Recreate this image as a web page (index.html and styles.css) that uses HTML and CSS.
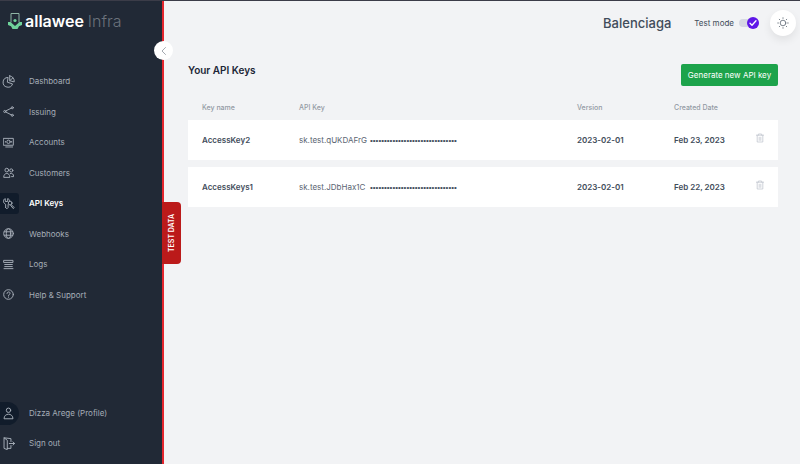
FILE: index.html
```
<!DOCTYPE html>
<html lang="en">
<head>
    <meta charset="UTF-8">
    <meta name="viewport" content="width=device-width, initial-scale=1.0">
    <title>API Keys</title>
    <link rel="stylesheet" href="styles.css">
</head>
<body>
    <div class="app">
        <aside class="sidebar">
            <a class="logo" href="#">
                <svg class="logo-mark" viewBox="0 0 14 18">
                    <path d="M3 10V1.500h8V10" fill="none" stroke="#8fb5a5" stroke-width="1"/>
                    <circle cx="7" cy="8.500" r="1.600" fill="#6fd39b"/>
                    <path d="M0 10h2.500L7 14l4.500-4H14v3l-3 1.200L9.500 17h-5L3 14.200 0 13z" fill="#6fd39b"/>
                </svg>
                <span class="logo-name">allawee</span>
                <span class="logo-sub">Infra</span>
            </a>

            <nav class="nav">
                <a class="nav-link" href="#">
                    <span class="nav-icon"><svg class="icon-lg" viewBox="0 0 16 16"><path d="M7 3a6 6 0 1 0 6 8L7 9z"/><path d="M9.500 1v6l5.500 1.500A6.500 6.500 0 0 0 9.500 1zM9.500 7l4-3.500"/></svg></span>
                    Dashboard
                </a>
                <a class="nav-link" href="#">
                    <span class="nav-icon"><svg viewBox="0 0 16 16"><circle cx="2.500" cy="8" r="1.500"/><circle cx="13.500" cy="2.500" r="1.500"/><circle cx="13.500" cy="13.500" r="1.500"/><path d="M4 7.200l8-4M4 8.800l8 4"/></svg></span>
                    Issuing
                </a>
                <a class="nav-link" href="#">
                    <span class="nav-icon"><svg viewBox="0 0 16 16"><path d="M1 2h14v10H1zM4 14.500h10"/><circle cx="8" cy="7" r="2.500"/><path d="M3.500 6.500v1M12.500 6.500v1"/></svg></span>
                    Accounts
                </a>
                <a class="nav-link" href="#">
                    <span class="nav-icon"><svg viewBox="0 0 16 16"><circle cx="5.500" cy="4.500" r="2.700"/><circle cx="12" cy="5" r="2.300"/><path d="M1 14.500c0-7 9-7 9 0zM10.500 9.500c3-1 5 1 5 4.500h-3"/></svg></span>
                    Customers
                </a>
                <a class="nav-link active" href="#">
                    <span class="nav-icon"><svg class="icon-lg" viewBox="0 0 16 16"><path d="M4.500 13V9C1 7.500 1 3 4 2v3.500h3V2c1.500.5 2.500 1.500 2.500 3M4.500 13L6 14.500 7.500 13V9.500"/><circle cx="10" cy="7.500" r="2.300"/><path d="M11.500 9.500l3.500 3.500-1.200 1.200-3-3.700"/></svg></span>
                    API Keys
                </a>
                <a class="nav-link" href="#">
                    <span class="nav-icon"><svg viewBox="0 0 16 16"><circle cx="8" cy="8" r="7"/><ellipse cx="8" cy="8" rx="3.200" ry="7"/><path d="M2 5.500h12M2 10.500h12"/></svg></span>
                    Webhooks
                </a>
                <a class="nav-link" href="#">
                    <span class="nav-icon"><svg viewBox="0 0 16 16"><path d="M1.500 2h13v3h-13zM2.500 8h11M2.500 11h11M1.500 14h13"/></svg></span>
                    Logs
                </a>
                <a class="nav-link" href="#">
                    <span class="nav-icon"><svg viewBox="0 0 16 16"><circle cx="8" cy="8" r="7"/><path d="M5.800 6.500c0-3 4.500-3 4.500-.3C10.300 7.800 8 7.800 8 9.500M8 11.500v.5"/></svg></span>
                    Help &amp; Support
                </a>
            </nav>

            <div class="nav-footer">
                <a class="nav-link" href="#">
                    <span class="nav-icon avatar"><svg class="icon-lg" viewBox="0 0 16 16"><circle cx="8" cy="4" r="2.700"/><path d="M2.500 14c0-7 11-7 11 0z"/></svg></span>
                    Dizza Arege (Profile)
                </a>
                <a class="nav-link" href="#">
                    <span class="nav-icon"><svg class="icon-lg" viewBox="0 0 16 16"><path d="M11 5.500V2L2.500 1v13l4 1.500V4L2.500 1M6.500 14H11v-3.500M9 8h6.500M13.500 6l2 2-2 2"/></svg></span>
                    Sign out
                </a>
            </div>

            <button class="collapse" type="button" aria-label="Collapse menu">
                <svg viewBox="0 0 10 10"><path d="M6.500 1.500L3 5l3.500 3.500"/></svg>
            </button>
            <div class="test-tab">TEST DATA</div>
        </aside>

        <main class="main">
            <header class="topbar">
                <h1 class="company">Balenciaga</h1>
                <label class="test-mode">
                    Test mode
                    <input class="switch-input" type="checkbox" checked>
                    <span class="switch">
                        <svg class="switch-thumb" viewBox="0 0 12 12"><circle cx="6" cy="6" r="6"/><path d="M3 6.300l2 2 4-4.500"/></svg>
                    </span>
                </label>
                <button class="theme-btn" type="button" aria-label="Change theme">
                    <svg viewBox="0 0 16 16"><circle cx="8" cy="8" r="3.200"/><path d="M8 2v.8M8 13.200v.8M2 8h.8M13.200 8h.8M3.700 3.700l.6.6M11.700 11.700l.6.6M3.700 12.300l.6-.6M11.700 4.300l.6-.6"/></svg>
                </button>
            </header>

            <section class="content">
                <div class="content-head">
                    <h2>Your API Keys</h2>
                    <button class="generate-btn" type="button">Generate new API key</button>
                </div>

                <table class="keys">
                    <thead>
                        <tr>
                            <th class="col-name">Key name</th>
                            <th>API Key</th>
                            <th class="col-version">Version</th>
                            <th class="col-date">Created Date</th>
                            <th class="col-action"></th>
                        </tr>
                    </thead>
                    <tbody>
                        <tr>
                            <td>AccessKey2</td>
                            <td class="key"><span class="key-value">sk.test.qUKDAFrG</span><span class="dots">•••••••••••••••••••••••••••••••</span></td>
                            <td>2023-02-01</td>
                            <td>Feb 23, 2023</td>
                            <td>
                                <button class="delete-btn" type="button" aria-label="Delete AccessKey2">
                                    <svg viewBox="0 0 10 12"><path d="M.5 2.500h9M3 2.500V1h4v1.500M1.500 2.500V11h7V2.500M4 5v4M6 5v4"/></svg>
                                </button>
                            </td>
                        </tr>
                        <tr>
                            <td>AccessKeys1</td>
                            <td class="key"><span class="key-value">sk.test.JDbHax1C</span><span class="dots">•••••••••••••••••••••••••••••••</span></td>
                            <td>2023-02-01</td>
                            <td>Feb 22, 2023</td>
                            <td>
                                <button class="delete-btn" type="button" aria-label="Delete AccessKeys1">
                                    <svg viewBox="0 0 10 12"><path d="M.5 2.500h9M3 2.500V1h4v1.500M1.500 2.500V11h7V2.500M4 5v4M6 5v4"/></svg>
                                </button>
                            </td>
                        </tr>
                    </tbody>
                </table>
            </section>
        </main>
    </div>
</body>
</html>
```
FILE: styles.css
```
* {
    box-sizing: border-box;
}
body {
    margin: 0;
    font-family: Inter, "Liberation Sans", sans-serif;
    font-size: 8px;
    line-height: 12px;
    color: #414c5a;
    background: #f2f3f5;
}
button {
    font: inherit;
    border: none;
    padding: 0;
    cursor: pointer;
}
svg {
    display: block;
    fill: none;
    stroke: currentColor;
    stroke-linecap: round;
    stroke-linejoin: round;
}
.app {
    display: flex;
    min-height: 100vh;
    border-top: 1px solid #3b3c48;
}

/* sidebar */
.sidebar {
    position: relative;
    display: flex;
    flex-direction: column;
    flex: none;
    width: 164px;
    padding: 10px 0 6px;
    background: #212936;
    border-right: 2px solid #e3262e;
}
.logo {
    display: flex;
    align-items: center;
    height: 20px;
    padding-left: 8px;
    margin-bottom: 35px;
    font-size: 16px;
    line-height: 20px;
    text-decoration: none;
}
.logo-mark {
    width: 14px;
    height: 18px;
    margin-right: 3px;
    stroke: none;
}
.logo-name {
    font-weight: 600;
    color: #fff;
    margin-right: 4px;
}
.logo-sub {
    font-weight: 300;
    color: #6b727c;
}
.nav {
    display: grid;
    grid-auto-rows: 1fr;
    min-height: 244px;
}
.nav-footer {
    margin-top: auto;
    display: grid;
    grid-auto-rows: 30px;
}
.nav-link {
    display: flex;
    align-items: center;
    gap: 10px;
    color: #a5adb7;
    text-decoration: none;
}
.nav-icon {
    display: flex;
    align-items: center;
    justify-content: center;
    width: 19px;
    height: 21px;
    padding-right: 2px;
    border-radius: 0 3px 3px 0;
}
.nav-icon svg {
    flex: none;
    width: 11px;
    height: 11px;
    stroke-width: 1.4;
}
.nav-icon .icon-lg {
    width: 13px;
    height: 13px;
    stroke-width: 1.2;
}
.nav-link.active {
    color: #fff;
    font-weight: 600;
}
.nav-link.active .nav-icon {
    background: #111c2b;
    color: #a5adb7;
}
.nav-icon.avatar {
    height: 23px;
    background: #111c2b;
    border-radius: 0 12px 12px 0;
}
.collapse {
    position: absolute;
    top: 40px;
    right: -11px;
    display: flex;
    align-items: center;
    justify-content: center;
    width: 19px;
    height: 19px;
    border-radius: 50%;
    background: #fff;
    color: #a4a9b0;
}
.collapse svg {
    width: 10px;
    height: 10px;
}
.test-tab {
    position: absolute;
    top: 201px;
    left: 100%;
    width: 19px;
    height: 62px;
    border-radius: 4px 0 0 4px;
    background: #bb1a1a;
    color: #fff;
    font-size: 7px;
    font-weight: 600;
    line-height: 19px;
    text-align: center;
    writing-mode: vertical-rl;
    transform: rotate(180deg);
}

/* main area */
.main {
    flex: 1;
    min-width: 0;
}
.topbar {
    display: flex;
    align-items: center;
    justify-content: flex-end;
    height: 44px;
    padding-right: 4px;
}
.company {
    margin: 0 23px 0 0;
    font-size: 13px;
    font-weight: 500;
    line-height: 20px;
}
.test-mode {
    display: flex;
    align-items: center;
    margin-right: 11px;
}
.switch-input {
    position: absolute;
    opacity: 0;
}
.switch {
    display: flex;
    align-items: center;
    justify-content: flex-end;
    width: 20px;
    height: 8px;
    margin-left: 5px;
    border-radius: 4px;
    background: #d6d8e2;
}
.switch-thumb {
    width: 12px;
    height: 12px;
    flex: none;
    stroke: none;
    fill: #5f17e8;
}
.switch-thumb path {
    fill: none;
    stroke: #fff;
    stroke-width: 1.3;
}
.theme-btn {
    display: flex;
    align-items: center;
    justify-content: center;
    width: 26px;
    height: 26px;
    border-radius: 50%;
    background: #fff;
    color: #6a737f;
    box-shadow: 0 4px 8px rgba(0, 0, 0, 0.08);
}
.theme-btn svg {
    width: 14px;
    height: 14px;
}
.content {
    padding: 19px 22px 0 24px;
}
.content-head {
    display: flex;
    align-items: flex-start;
    justify-content: space-between;
}
.content-head h2 {
    margin: 0;
    font-size: 10px;
    font-weight: 600;
    line-height: 12px;
    color: #1d2737;
}
.generate-btn {
    width: 97px;
    height: 22px;
    border-radius: 2px;
    background: #1da34b;
    color: #fff;
    white-space: nowrap;
}
.keys {
    width: 100%;
    margin-top: 10px;
    table-layout: fixed;
    border-collapse: separate;
    border-spacing: 0 7px;
}
.keys th,
.keys td {
    padding: 0;
    text-align: left;
    white-space: nowrap;
}
.keys th {
    font-size: 7px;
    font-weight: 500;
    line-height: 10px;
    color: #929aa4;
}
.keys td {
    height: 40px;
    background: #fff;
    font-weight: 600;
}
.keys th:first-child,
.keys td:first-child {
    padding-left: 14px;
}
.keys .key {
    font-weight: 400;
    color: #5b6572;
}
.key-value {
    display: inline-block;
    min-width: 71px;
}
.dots {
    font-family: "Liberation Sans", sans-serif;
    color: #414c5a;
}
.col-name {
    width: 111px;
}
.col-version {
    width: 97px;
}
.col-date {
    width: 82px;
}
.col-action {
    width: 22px;
}
.delete-btn {
    display: block;
    padding-bottom: 4px;
    background: none;
    color: #c3c8d0;
}
.delete-btn svg {
    width: 8px;
    height: 10px;
}
```
